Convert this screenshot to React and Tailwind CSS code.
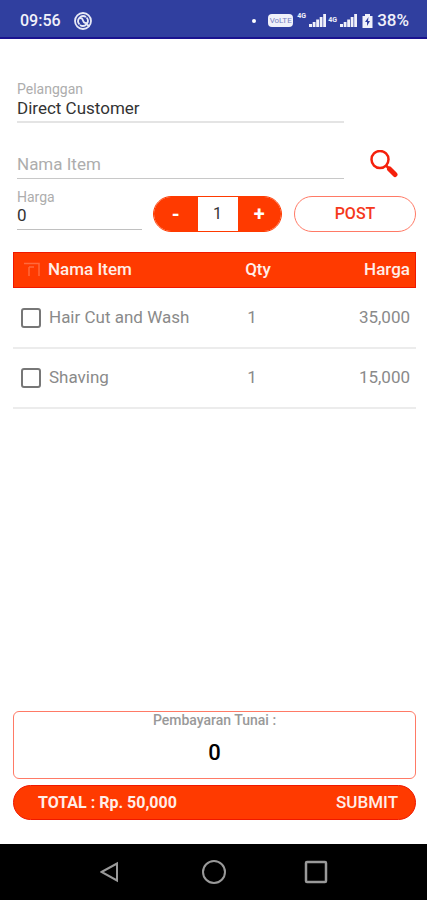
import { useState } from "react";

const items = [
    { name: "Hair Cut and Wash", qty: 1, price: 35000 },
    { name: "Shaving", qty: 1, price: 15000 },
];

const format = (value) => value.toLocaleString("en-US");

const Signal = () => (
    <svg width="18" height="13" viewBox="0 0 18 13" fill="#f0f1fa">
        <path d="M0 10h3v3H0zM3.700 8h2.800v5H3.700zM7.200 5.500H10V13H7.200zM10.700 3h2.800v10h-2.800zM14.200 0H17v13h-2.800z" />
    </svg>
);

const StatusBar = () => (
    <div className="flex h-[39px] shrink-0 items-center border-b-2 border-[#1a1390] bg-[#303f9f] pt-1 pl-5 pr-[18px] text-[#f0f1fa]">
        <span className="text-base font-medium">09:56</span>
        <svg className="ml-3" width="20" height="20" viewBox="0 0 20 20" fill="none" stroke="#e8eaf6">
            <circle cx="10" cy="10" r="8" strokeWidth="1.800" />
            <path d="M6.500 13.500A5 5 0 0 1 13 6M13.500 6.500A5 5 0 0 1 7 14" strokeWidth="1.800" />
            <path d="M6.500 7.500c2-1 3 .5 3.500 2s1.500 3 4 2.500" strokeWidth="1.800" />
            <path d="M14 13.500l2.500 2" strokeWidth="2" />
        </svg>
        <span className="ml-auto h-1 w-1 rounded-full bg-white" />
        <span className="ml-3 flex h-[13px] w-[25px] items-center justify-center rounded-sm bg-[#f0f1fa] text-[8px] text-[#7882c0]">VoLTE</span>
        <div className="ml-1 flex items-center">
            <span className="mb-2 w-3 text-[7px] font-bold leading-none">4G</span>
            <Signal />
            <span className="ml-px w-3 text-[7px] font-bold leading-none">4G</span>
            <Signal />
        </div>
        <svg className="ml-1" width="11" height="14" viewBox="0 0 11 14">
            <path d="M3 0h5v2h2.500v12H.5V2H3z" fill="#f0f1fa" />
            <path d="M6.500 3L3 8h2v4l3-5H6z" fill="#303f9f" />
        </svg>
        <span className="ml-1 text-[17px] font-medium">38%</span>
    </div>
);

const HeaderTick = () => (
    <svg width="16" height="16" viewBox="0 0 16 16" fill="none" stroke="#ff6a3d" strokeWidth="1.500">
        <path d="M0 1.500h15V14M5 5v9M5 5h5" />
    </svg>
);

const NavBar = () => (
    <nav className="flex h-14 shrink-0 items-center justify-center gap-[78px] bg-black">
        <button aria-label="Back">
            <svg width="24" height="24" viewBox="0 0 24 24" fill="none" stroke="#999" strokeWidth="2">
                <path d="M1.500 12L17 3.500v17z" />
            </svg>
        </button>
        <button aria-label="Home">
            <svg width="24" height="24" viewBox="0 0 24 24" fill="none" stroke="#999" strokeWidth="2">
                <circle cx="12" cy="12" r="11" />
            </svg>
        </button>
        <button aria-label="Recent apps">
            <svg width="24" height="24" viewBox="0 0 24 24" fill="none" stroke="#999" strokeWidth="2.500">
                <rect x="2" y="2" width="20" height="20" rx="1" />
            </svg>
        </button>
    </nav>
);

const App = () => {
    const [qty, setQty] = useState(1);
    const [customer, setCustomer] = useState("Direct Customer");
    const [item, setItem] = useState("");
    const [price, setPrice] = useState("0");
    const [cash, setCash] = useState("0");
    const total = items.reduce((sum, { qty, price }) => sum + qty * price, 0);

    return (
        <div className="flex min-h-screen flex-col bg-white font-[Roboto,sans-serif]">
            <StatusBar />
            <main className="flex flex-1 flex-col pb-6 pl-[13px] pr-[11px] pt-10">
                <div className="mr-[72px] ml-1 flex flex-col border-b-2 border-[#e4e4e4]">
                    <label htmlFor="customer" className="text-sm text-[#adadad]">Pelanggan</label>
                    <input id="customer" value={customer} onChange={(e) => setCustomer(e.target.value)} className="h-[22px] w-full pb-0.5 text-[17px] text-[#333] outline-none" />
                </div>
                <div className="mt-[26px] ml-1 flex items-center">
                    <input aria-label="Nama Item" placeholder="Nama Item" value={item} onChange={(e) => setItem(e.target.value)} className="h-[30px] min-w-0 flex-1 border-b border-[#c8c8c8] text-[17px] text-[#333] outline-none placeholder:text-[#adadad]" />
                    <button aria-label="Cari" className="flex w-[72px] justify-center pl-2">
                        <svg width="28" height="28" viewBox="0 0 28 28" fill="none" stroke="#f5200c">
                            <circle cx="10" cy="9.500" r="8.500" strokeWidth="2.500" />
                            <path d="M16 15.500l3 3" strokeWidth="2.500" />
                            <path d="M19.500 19l5.500 5.500" strokeWidth="5" strokeLinecap="round" />
                        </svg>
                    </button>
                </div>
                <div className="mt-2 flex items-end">
                    <div className="mb-0.5 ml-1 mr-[11px] flex min-w-0 flex-1 flex-col border-b border-[#c0c0c0]">
                        <label htmlFor="price" className="text-sm text-[#adadad]">Harga</label>
                        <input id="price" value={price} onChange={(e) => setPrice(e.target.value)} className="h-[22px] w-full pb-1 text-[17px] text-[#333] outline-none" />
                    </div>
                    <div className="flex h-9 w-[129px] overflow-hidden rounded-full border border-[#ff3a00] text-white">
                        <button aria-label="Kurangi" onClick={() => setQty(Math.max(1, qty - 1))} className="flex-1 bg-[#ff3a00] text-xl font-bold">-</button>
                        <span className="flex w-10 items-center justify-center text-base text-[#333]">{qty}</span>
                        <button aria-label="Tambah" onClick={() => setQty(qty + 1)} className="flex-1 bg-[#ff3a00] text-xl font-bold">+</button>
                    </div>
                    <button className="ml-3 h-9 w-[122px] rounded-full border border-[#ff7a66] text-base font-medium text-[#f5381c]">POST</button>
                </div>
                <table className="mt-5 w-full table-fixed text-[17px] text-[#8a8a8a]">
                    <thead>
                        <tr className="h-9 bg-[#ff3a00] text-[#ffeee8] outline-1 -outline-offset-1 outline-[#f01800]">
                            <th className="pl-[11px] text-left font-medium">
                                <span className="flex items-center gap-2"><HeaderTick />Nama Item</span>
                            </th>
                            <th className="w-16 text-center font-medium">Qty</th>
                            <th className="w-[126px] pr-[6px] text-right font-medium">Harga</th>
                        </tr>
                    </thead>
                    <tbody>
                        {items.map(({ name, qty, price }) => (
                            <tr key={name} className="h-[60px] border-b-2 border-[#ececec]">
                                <td className="pl-2">
                                    <label className="flex items-center gap-2">
                                        <input type="checkbox" className="h-5 w-5 appearance-none rounded-[3px] border-2 border-[#777] checked:bg-[#ff3a00]" />
                                        {name}
                                    </label>
                                </td>
                                <td className="pr-3 text-center">{qty}</td>
                                <td className="pr-[6px] text-right">{format(price)}</td>
                            </tr>
                        ))}
                    </tbody>
                </table>
                <div className="mt-auto flex h-[68px] flex-col items-center rounded-md border border-[#ff7a66]">
                    <label htmlFor="cash" className="text-sm font-medium leading-4 text-[#999]">Pembayaran Tunai :</label>
                    <input id="cash" value={cash} onChange={(e) => setCash(e.target.value)} className="mt-2 h-8 w-full text-center text-[22px] font-medium text-black outline-none" />
                </div>
                <div className="mt-[6px] flex h-[35px] items-center justify-between rounded-full border border-[#f01800] bg-[#ff3a00] pl-6 pr-[17px] text-[#ffeee8]">
                    <span className="text-base font-bold">TOTAL : Rp. {format(total)}</span>
                    <button className="text-[17px] font-medium">SUBMIT</button>
                </div>
            </main>
            <NavBar />
        </div>
    );
};

export default App;
